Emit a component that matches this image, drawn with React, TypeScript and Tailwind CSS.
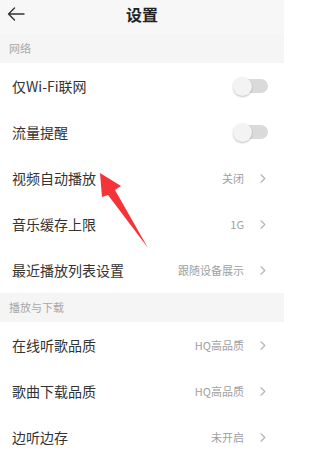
import React from "react";

const font = { fontFamily: '"Noto Sans CJK SC", "Noto Sans", sans-serif' };

function Chevron() {
  return (
    <svg width="6" height="9" viewBox="0 0 6 9" className="ml-[16px]">
      <path d="M1 0.8 L4.8 4.5 L1 8.2" fill="none" stroke="#b5b5b5" strokeWidth="1.2" strokeLinecap="round" strokeLinejoin="round" />
    </svg>
  );
}

function Toggle() {
  return (
    <div className="relative w-[35px] h-[18px] flex items-center">
      <div className="ml-[5px] w-[30px] h-[14px] rounded-full bg-[#dadada]" />
      <div className="absolute left-0 top-0 w-[19px] h-[19px] rounded-full bg-[#f3f3f3] shadow-[0_1px_2px_rgba(0,0,0,0.25)]" />
    </div>
  );
}

function Section({ title }: { title: string }) {
  return (
    <div className="h-[29px] bg-[#f5f5f5] flex items-center pl-[9px] text-[11px] text-[#a8a8a8]">{title}</div>
  );
}

function Row({ label, value, toggle }: { label: string; value?: string; toggle?: boolean }) {
  return (
    <div className="h-[46px] bg-white flex items-center pl-[12px] pr-[16px]">
      <span className="flex-1 text-[14px] text-[#333]">{label}</span>
      {toggle ? (
        <Toggle />
      ) : (
        <div className="flex items-center pr-[2px]">
          <span className="text-[11px] text-[#a0a0a0]">{value}</span>
          <Chevron />
        </div>
      )}
    </div>
  );
}

export default function App() {
  return (
    <div className="relative w-[284px] h-[455px] overflow-hidden bg-white" style={font}>
      <div className="h-[34px] bg-[#f7f7f7] flex items-center relative pb-[6px]">
        <svg width="18" height="14" viewBox="0 0 18 14" className="absolute left-[7px] top-[7px]">
          <path d="M17 7 H1.5 M7.5 1 L1.5 7 L7.5 13" fill="none" stroke="#333" strokeWidth="1.4" strokeLinecap="round" strokeLinejoin="round" />
        </svg>
        <div className="flex-1 text-center text-[16px] font-bold text-[#222]">设置</div>
      </div>
      <Section title="网络" />
      <Row label="仅Wi-Fi联网" toggle />
      <Row label="流量提醒" toggle />
      <Row label="视频自动播放" value="关闭" />
      <Row label="音乐缓存上限" value="1G" />
      <Row label="最近播放列表设置" value="跟随设备展示" />
      <Section title="播放与下载" />
      <Row label="在线听歌品质" value="HQ高品质" />
      <Row label="歌曲下载品质" value="HQ高品质" />
      <Row label="边听边存" value="未开启" />
      <svg width="284" height="455" viewBox="0 0 284 455" className="absolute left-0 top-0 pointer-events-none">
        <polygon points="100,173 121,186 115,190 148,248 108,195 102,197" fill="#f5343a" />
      </svg>
    </div>
  );
}
